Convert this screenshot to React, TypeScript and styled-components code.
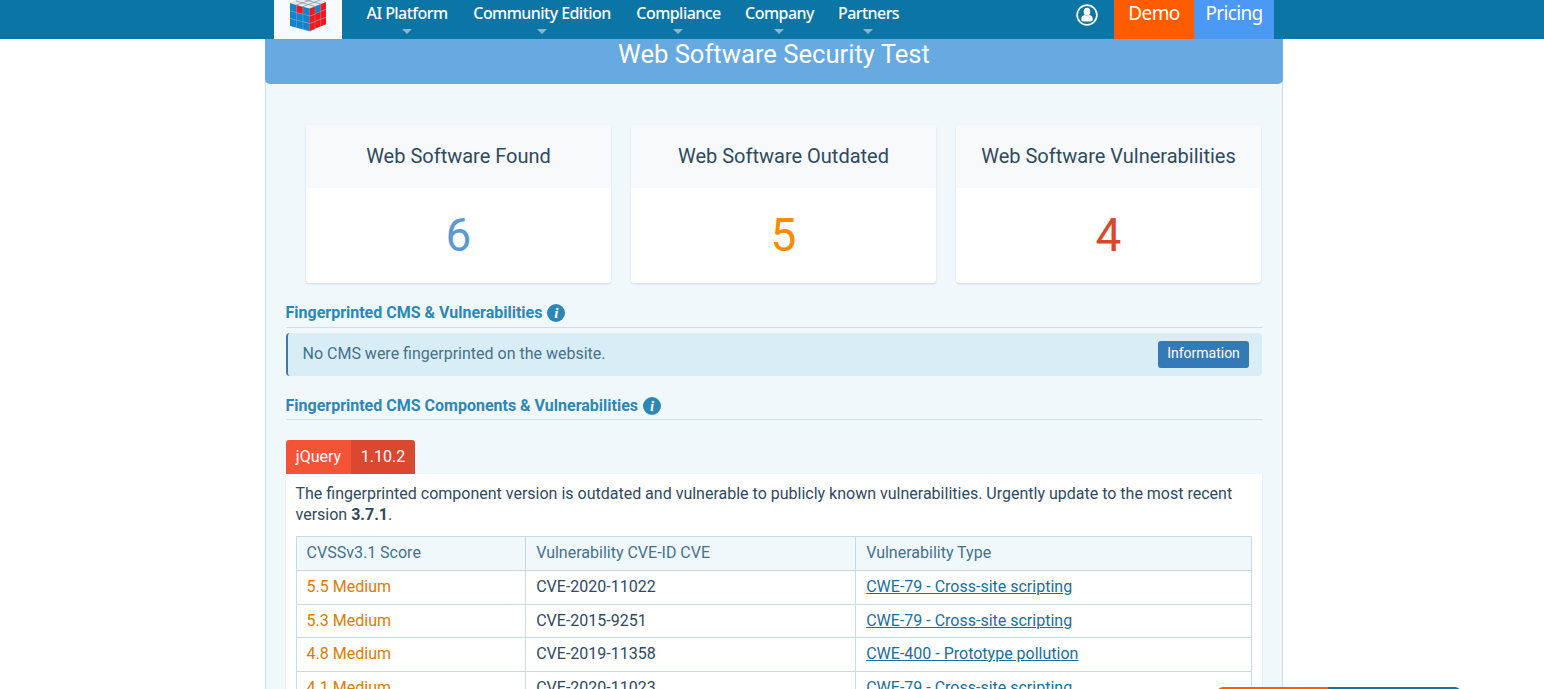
import React from "react";
import styled, { createGlobalStyle } from "styled-components";

const GlobalStyle = createGlobalStyle`
  * { box-sizing: border-box; }
  html, body { margin: 0; height: 100%; overflow: hidden; }
  body {
    background: #fff;
    color: #2f4a5e;
    font: 400 16px/21px Roboto, "Liberation Sans", sans-serif;
  }
`;

const Page = styled.div`
  height: 689px;
  overflow: hidden;
`;

const TopBar = styled.header`
  height: 39px;
  background: #0b75a6;
  font-family: "Noto Sans", "Open Sans", sans-serif;
  color: #fff;
`;

const TopBarInner = styled.div`
  display: flex;
  align-items: stretch;
  width: 1000px;
  height: 39px;
  margin-left: 274px;
`;

const Logo = styled.div`
  width: 68px;
  background: #f7fbff;
  display: flex;
  justify-content: center;
  margin-right: 24px;
`;

const Nav = styled.nav`
  display: flex;
  gap: 24px;
  flex: 1;
`;

const NavItem = styled.a<{ $w: number }>`
  display: flex;
  flex-direction: column;
  align-items: center;
  width: ${(p) => p.$w}px;
  font-size: 16px;
  font-weight: 550;
  line-height: 20px;
  padding-top: 3px;
  white-space: nowrap;
  letter-spacing: -0.55px;
`;

const Caret = styled.span`
  margin: 6px 1px 0 0;
  border: 5px solid transparent;
  border-top-color: #86bad3;
  border-bottom: 0;
`;

const Account = styled.div`
  width: 38px;
  padding-top: 4px;
`;

const Cta = styled.a<{ $bg: string; $ls: number }>`
  width: 80px;
  background: ${(p) => p.$bg};
  font-size: 19px;
  font-weight: 450;
  line-height: 27px;
  letter-spacing: ${(p) => p.$ls}px;
  text-align: center;
`;

const Report = styled.main`
  width: 1018px;
  margin-left: 265px;
  height: 650px;
  border: solid #c8dfec;
  border-width: 0 1px;
  background: #f0f8fc;
`;

const ReportTitle = styled.h1`
  margin: 0 -1px;
  height: 45px;
  background: #67a9e1;
  border-radius: 0 0 5px 5px;
  color: #fff;
  font-size: 25.6px;
  font-weight: 400;
  line-height: 30px;
  text-align: center;
`;

const Body = styled.div`
  padding: 41px 20px 0;
`;

const Cards = styled.div`
  display: flex;
  gap: 20px;
  padding-left: 20px;
`;

const Card = styled.section`
  width: 305px;
  height: 158px;
  background: #fff;
  border-radius: 3px;
  box-shadow: 0 1px 2px rgba(40, 80, 110, 0.18);
  overflow: hidden;
  text-align: center;
`;

const CardTitle = styled.h2`
  margin: 0;
  height: 63px;
  background: #f7f9fb;
  font-size: 20px;
  font-weight: 400;
  line-height: 62px;
`;

const CardValue = styled.div<{ $color: string }>`
  color: ${(p) => p.$color};
  font-size: 46px;
  line-height: 95px;
`;

const SectionTitle = styled.h3<{ $top: number; $height: number }>`
  display: flex;
  align-items: center;
  gap: 5px;
  margin: ${(p) => p.$top}px 0 0 -0.5px;
  height: ${(p) => p.$height}px;
  border-bottom: 1px solid #c8dfec;
  color: #2d87b5;
  font-size: 16px;
  font-weight: 700;
`;

const InfoDot = styled.span`
  width: 18px;
  height: 18px;
  border-radius: 50%;
  background: #2d87b5;
  color: #fff;
  font: italic 700 15px/18px "Liberation Serif", serif;
  text-align: center;
`;

const Notice = styled.div`
  display: flex;
  justify-content: space-between;
  height: 43px;
  margin-top: 5px;
  padding: 8px 13px 0 14.5px;
  background: #d9edf7;
  border-left: 2px solid #337ab7;
  border-radius: 4px;
  color: #45718c;
  line-height: 25px;
`;

const Tag = styled.span`
  height: 27px;
  width: 91px;
  border-radius: 3px;
  background: #337ab7;
  color: #fff;
  font-size: 14px;
  font-weight: 450;
  line-height: 25px;
  text-align: center;
`;

const Version = styled.div`
  display: flex;
  margin-top: 20px;
  width: 129px;
  height: 34px;
  border-radius: 3px 3px 0 0;
  overflow: hidden;
  color: #fff;
  line-height: 33px;
  text-align: center;
`;

const VersionPart = styled.span<{ $bg: string; $w: number }>`
  width: ${(p) => p.$w}px;
  background: ${(p) => p.$bg};
`;

const Component = styled.div`
  height: 240px;
  padding: 9px 10px 0;
  background: #fff;
  box-shadow: 0 1px 2px rgba(40, 100, 140, 0.14);
`;

const Message = styled.p`
  margin: 0 0 11px -0.5px;
`;

const Table = styled.div`
  width: 956px;
  border: solid #c8dae5;
  border-width: 1px 1px 0;
`;

const Row = styled.div<{ $head?: boolean; $h: number }>`
  display: grid;
  grid-template-columns: 228px 330px 1fr;
  height: ${(p) => p.$h}px;
  border-bottom: 1px solid #c8dae5;
  background: ${(p) => (p.$head ? "#f0f8fc" : "#fff")};
  color: ${(p) => (p.$head ? "#45718c" : "inherit")};
`;

const Cell = styled.div<{ $color?: string }>`
  padding-left: 9.6px;
  line-height: 31px;
  color: ${(p) => p.$color ?? "inherit"};
  & + & { border-left: 1px solid #c8dae5; padding-left: 10.2px; }
`;

const CweLink = styled.a`
  color: #17709c;
  text-decoration: underline;
`;

const ChatBar = styled.div`
  position: fixed;
  left: 1217px;
  bottom: -38px;
  display: flex;
  width: 244px;
  height: 40px;
  border-radius: 6px;
  overflow: hidden;
`;

const ChatHalf = styled.span<{ $bg: string; $w: number }>`
  width: ${(p) => p.$w}px;
  background: ${(p) => p.$bg};
`;

const blue = "#0c84d0";
const red = "#fb1419";
const white = "#e3ebf0";
const faces = [0, 1, 2].flatMap((c) => [0, 1, 2].map((r) => [c, r]));

function CubeLogo() {
  return (
    <svg width="38" height="39" viewBox="0 0 38 39">
      <path d="M1 3 19-4 37 2V23.500L20.500 31.500 1 26Z" fill="#8fa3ae" />
      <path d="M1 3 19-4 37 2 20 8.500Z" fill={white} />
      <path d="M7 1 26 6.500M13-1 32 4M7 5 25-1M13 7 31 0" stroke="#8b9ca5" strokeWidth="0.800" />
      {faces.map(([c, r]) => {
        const x = 1 + c * 6.6;
        const y = 3.6 + c * 1.7 + r * 7.6;
        return (
          <path
            key={`l${c}${r}`}
            d={`M${x} ${y}l6.100 1.600v6.900l-6.100-1.600z`}
            fill={r === 0 && c === 1 ? red : blue}
          />
        );
      })}
      {faces.map(([c, r]) => {
        const x = 20.6 + c * 5.6;
        const y = 8.8 - c * 2.3 + r * 7.6;
        return (
          <path
            key={`r${c}${r}`}
            d={`M${x} ${y}l5.200-2v6.900l-5.200 2z`}
            fill={r === 0 && c === 1 ? blue : red}
          />
        );
      })}
    </svg>
  );
}

function AccountIcon() {
  return (
    <svg width="22" height="22" viewBox="0 0 22 22">
      <circle cx="11" cy="11" r="9.900" fill="none" stroke="#fff" strokeWidth="1.700" />
      <ellipse cx="11" cy="7.700" rx="3.300" ry="3.900" fill="#fff" />
      <path d="M5.200 15.200c0-2.600 1.500-3.900 3.600-4.300 1.300 1.100 3.100 1.100 4.400 0 2.100.4 3.600 1.700 3.600 4.300 0 1.500-1 2.200-2.500 2.200H7.700c-1.500 0-2.500-.7-2.500-2.200z" fill="#fff" />
    </svg>
  );
}

const navItems = [
  { label: "AI Platform", width: 82 },
  { label: "Community Edition", width: 140 },
  { label: "Compliance", width: 85 },
  { label: "Company", width: 69 },
  { label: "Partners", width: 61 },
];

const cards = [
  { title: "Web Software Found", value: 6, color: "#5b9bd1" },
  { title: "Web Software Outdated", value: 5, color: "#ff8a00" },
  { title: "Web Software Vulnerabilities", value: 4, color: "#d9482b" },
];

const rows = [
  { score: "5.5 Medium", cve: "CVE-2020-11022", cwe: "CWE-79 - Cross-site scripting", height: 34 },
  { score: "5.3 Medium", cve: "CVE-2015-9251", cwe: "CWE-79 - Cross-site scripting", height: 33 },
  { score: "4.8 Medium", cve: "CVE-2019-11358", cwe: "CWE-400 - Prototype pollution", height: 34 },
  { score: "4.1 Medium", cve: "CVE-2020-11023", cwe: "CWE-79 - Cross-site scripting", height: 34 },
];

export default function App() {
  return (
    <Page>
      <GlobalStyle />
      <TopBar>
        <TopBarInner>
          <Logo><CubeLogo /></Logo>
          <Nav>
            {navItems.map((n) => (
              <NavItem key={n.label} $w={n.width}>
                {n.label}
                <Caret />
              </NavItem>
            ))}
          </Nav>
          <Account><AccountIcon /></Account>
          <Cta $bg="#ff5c00" $ls={-0.6}>Demo</Cta>
          <Cta $bg="#4b98f5" $ls={-0.65}>Pricing</Cta>
        </TopBarInner>
      </TopBar>
      <Report>
        <ReportTitle>Web Software Security Test</ReportTitle>
        <Body>
          <Cards>
            {cards.map((c) => (
              <Card key={c.title}>
                <CardTitle>{c.title}</CardTitle>
                <CardValue $color={c.color}>{c.value}</CardValue>
              </Card>
            ))}
          </Cards>
          <SectionTitle $top={15} $height={30}>
            Fingerprinted CMS &amp; Vulnerabilities <InfoDot>i</InfoDot>
          </SectionTitle>
          <Notice>
            No CMS were fingerprinted on the website.
            <Tag>Information</Tag>
          </Notice>
          <SectionTitle $top={16} $height={28}>
            Fingerprinted CMS Components &amp; Vulnerabilities <InfoDot>i</InfoDot>
          </SectionTitle>
          <Version>
            <VersionPart $bg="#f45436" $w={65}>jQuery</VersionPart>
            <VersionPart $bg="#d9482f" $w={64}>1.10.2</VersionPart>
          </Version>
          <Component>
            <Message>
              The fingerprinted component version is outdated and vulnerable to publicly known
              vulnerabilities. Urgently update to the most recent version <b>3.7.1</b>.
            </Message>
            <Table>
              <Row $head $h={34}>
                <Cell>CVSSv3.1 Score</Cell>
                <Cell>Vulnerability CVE-ID CVE</Cell>
                <Cell>Vulnerability Type</Cell>
              </Row>
              {rows.map((r) => (
                <Row key={r.cve} $h={r.height}>
                  <Cell $color="#e07b00">{r.score}</Cell>
                  <Cell>{r.cve}</Cell>
                  <Cell><CweLink>{r.cwe}</CweLink></Cell>
                </Row>
              ))}
            </Table>
          </Component>
        </Body>
      </Report>
      <ChatBar>
        <ChatHalf $bg="#ff5c00" $w={111} />
        <ChatHalf $bg="#0b75a6" $w={133} />
      </ChatBar>
    </Page>
  );
}
